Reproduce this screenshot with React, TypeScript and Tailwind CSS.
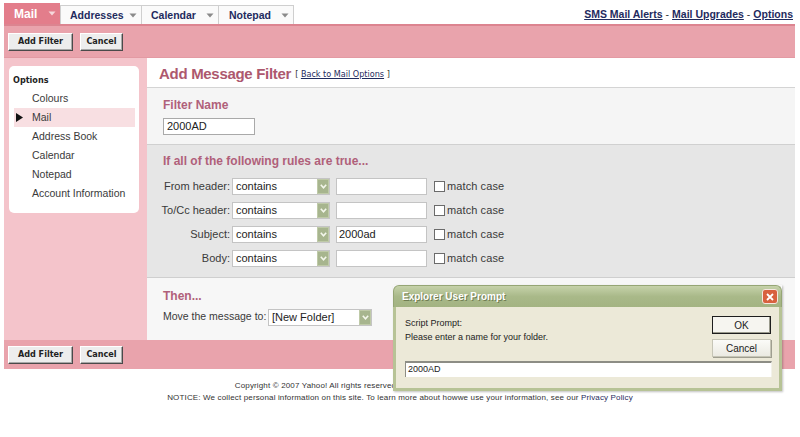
import React from 'react';

const SANS = "font-['Liberation_Sans','Arial',sans-serif]";
const COND = "font-['DejaVu_Sans_Condensed','DejaVu_Sans',sans-serif] [font-stretch:condensed]";

function TabArrow({ color }: { color: string }) {
  return (
    <svg width="8" height="5" viewBox="0 0 8 5" className="shrink-0">
      <path d="M0.5 0.5 L7.5 0.5 L4 4.5 Z" fill={color} />
    </svg>
  );
}

function Btn({ label, w }: { label: string; w: string }) {
  return (
    <div
      className={`${w} h-[18px] flex items-center justify-center bg-[#ededed] border border-t-[#ffffff] border-l-[#ffffff] border-r-[#4a4a4a] border-b-[#4a4a4a] shadow-[inset_-1px_-1px_0_#a8a8a8] text-[9px] font-bold text-[#222] ${COND}`}
    >
      {label}
    </div>
  );
}

function GreenDrop() {
  return (
    <div className="w-[12px] h-[15px] bg-[#a7b58e] border border-[#bfcaa8] flex items-center justify-center shrink-0">
      <svg width="7" height="5" viewBox="0 0 7 5">
        <path d="M0.8 0.8 L3.5 3.8 L6.2 0.8" stroke="#f4f7ec" strokeWidth="1.6" fill="none" />
      </svg>
    </div>
  );
}

function Select({ value, w }: { value: string; w: string }) {
  return (
    <div className={`${w} h-[17px] bg-white border border-[#c4c4c4] flex items-center justify-between pl-[3px] shrink-0`}>
      <span className="text-[11px] text-[#222] leading-none whitespace-nowrap">{value}</span>
      <GreenDrop />
    </div>
  );
}

function RuleRow({ label, value }: { label: string; value?: string }) {
  return (
    <div className="flex items-center h-[17px]">
      <div className="w-[85px] text-right text-[11px] text-[#3a3a3a] pr-[2px] whitespace-nowrap">{label}</div>
      <Select value="contains" w="w-[98px]" />
      <div className="w-[91px] h-[17px] ml-[6px] bg-white border border-[#c4c4c4] flex items-center pl-[2px] text-[11px] text-[#222]">
        {value ?? ''}
      </div>
      <div className="w-[11px] h-[11px] ml-[7px] bg-white border border-[#6b6b6b]" />
      <span className="ml-[2px] text-[11px] text-[#3a3a3a] tracking-[0.1px]">match case</span>
    </div>
  );
}

export default function App() {
  const sideItems = ['Colours', 'Mail', 'Address Book', 'Calendar', 'Notepad', 'Account Information'];
  return (
    <div className={`w-[800px] h-[437px] relative bg-white overflow-hidden ${SANS}`}>
      {/* Top nav */}
      <div className="h-[24px] flex items-end justify-between pl-[4px] pr-[7px]">
        <div className="flex items-end h-full">
          <div className="w-[56px] h-[21px] bg-[#e37d8b] flex items-center justify-between pl-[10px] pr-[4px]">
            <span className="text-white font-bold text-[12px] leading-none">Mail</span>
            <TabArrow color="#f6d8dc" />
          </div>
          <div className="w-[82px] h-[19px] bg-[#fafafa] border border-b-0 border-[#cfcfcf] flex items-center justify-between pl-[9px] pr-[4px]">
            <span className="text-[#1f2b5e] font-bold text-[10.5px] leading-none">Addresses</span>
            <TabArrow color="#8a8a8a" />
          </div>
          <div className="w-[77px] h-[19px] bg-[#fafafa] border border-b-0 border-l-0 border-[#cfcfcf] flex items-center justify-between pl-[9px] pr-[4px]">
            <span className="text-[#1f2b5e] font-bold text-[10.5px] leading-none">Calendar</span>
            <TabArrow color="#8a8a8a" />
          </div>
          <div className="w-[75px] h-[19px] bg-[#fafafa] border border-b-0 border-l-0 border-[#cfcfcf] flex items-center justify-between pl-[10px] pr-[4px]">
            <span className="text-[#1f2b5e] font-bold text-[10.5px] leading-none">Notepad</span>
            <TabArrow color="#8a8a8a" />
          </div>
        </div>
        <div className="h-full flex items-center pt-[5px] text-[10.5px] font-bold text-[#1f2b5e]">
          <span className="underline">SMS Mail Alerts</span>
          <span className="text-[#333] font-normal mx-[3px]">-</span>
          <span className="underline">Mail Upgrades</span>
          <span className="text-[#333] font-normal mx-[3px]">-</span>
          <span className="underline">Options</span>
        </div>
      </div>

      {/* Top toolbar */}
      <div className="ml-[4px] w-[791px] h-[34px] bg-[#e9a3ac] border-t-[2px] border-[#dc8490] border-b border-b-[#e39aa3] flex items-center gap-[7px] pl-[4px] pt-[1px]">
        <Btn label="Add Filter" w="w-[65px]" />
        <Btn label="Cancel" w="w-[43px]" />
      </div>

      {/* Main */}
      <div className="ml-[4px] w-[791px] h-[282px] flex">
        <div className="w-[143px] bg-[#f4c4cb] pt-[8px] pl-[5px]">
          <div className="w-[130px] h-[147px] bg-white rounded-[5px] pt-[8px]">
            <div className={`h-[12px] pl-[4px] text-[9px] font-bold text-[#222] leading-[12px] ${COND}`}>Options</div>
            <div className="mt-[3px]">
              {sideItems.map((it) => (
                <div
                  key={it}
                  className={`ml-[5px] w-[121px] h-[19px] flex items-center text-[10.5px] text-[#3a3a3a] ${it === 'Mail' ? 'bg-[#f8dfe2]' : ''}`}
                >
                  <div className="w-[18px] flex items-center pl-[2px]">
                    {it === 'Mail' && (
                      <svg width="7" height="9" viewBox="0 0 7 9">
                        <path d="M0 0 L7 4.5 L0 9 Z" fill="#111" />
                      </svg>
                    )}
                  </div>
                  <span>{it}</span>
                </div>
              ))}
            </div>
          </div>
        </div>

        <div className="flex-1 flex flex-col">
          <div className="h-[30px] bg-white border-b border-[#d4d4d4] flex items-center pl-[12px] pt-[3px]">
            <span className="text-[15px] font-bold text-[#ad586e] tracking-[-0.3px]">Add Message Filter</span>
            <span className={`ml-[4px] mt-[2px] text-[9px] text-[#333] ${COND}`}>
              [ <span className="underline text-[#1f2b5e]">Back to Mail Options</span> ]
            </span>
          </div>

          <div className="h-[57px] bg-[#f5f5f5] border-b border-[#d0d0d0] pl-[16px] pt-[10px]">
            <div className="h-[14px] leading-[14px] text-[12px] font-bold text-[#b0607a]">Filter Name</div>
            <div className="mt-[6px] w-[92px] h-[17px] bg-white border border-[#a9a9a9] flex items-center pl-[3px] text-[11px] text-[#222]">
              2000AD
            </div>
          </div>

          <div className="h-[133px] bg-[#e6e6e6] border-b border-[#cfcfcf] pt-[9px]">
            <div className="pl-[16px] h-[14px] leading-[14px] text-[12px] font-bold text-[#b0607a]">
              If all of the following rules are true...
            </div>
            <div className="mt-[10px] flex flex-col gap-[7px]">
              <RuleRow label="From header:" />
              <RuleRow label="To/Cc header:" />
              <RuleRow label="Subject:" value="2000ad" />
              <RuleRow label="Body:" />
            </div>
          </div>

          <div className="flex-1 bg-[#f7f7f7] pl-[16px] pt-[11px]">
            <div className="h-[14px] leading-[14px] text-[12px] font-bold text-[#b0607a]">Then...</div>
            <div className="mt-[5px] flex items-center h-[18px]">
              <span className="text-[10.5px] text-[#3a3a3a] w-[105px] shrink-0 whitespace-nowrap">Move the message to:</span>
              <Select value="[New Folder]" w="w-[104px]" />
            </div>
          </div>
        </div>
      </div>

      {/* Bottom toolbar */}
      <div className="ml-[4px] w-[791px] h-[29px] bg-[#e9a3ac] flex items-center gap-[7px] pl-[4px]">
        <Btn label="Add Filter" w="w-[65px]" />
        <Btn label="Cancel" w="w-[43px]" />
      </div>

      {/* Footer */}
      <div className="pt-[11px] text-center text-[8px] leading-[12px] text-[#333] tracking-[0.15px]">
        <div>Copyright © 2007 Yahoo! All rights reserved. Copyright/IP Policy - Terms of Service - Help</div>
        <div>
          NOTICE: We collect personal information on this site. To learn more about howwe use your information, see our{' '}
          <span className="text-[#1f2b5e]">Privacy Policy</span>
        </div>
      </div>

      {/* Dialog */}
      <div className="absolute left-[393px] top-[285px] w-[389px] h-[106px] flex flex-col shadow-[1px_1px_2px_rgba(0,0,0,0.25)]">
        <div className="relative h-[22px] rounded-t-[6px] bg-linear-to-b from-[#c6d2aa] via-[#a9b989] to-[#a3b382] border border-b-0 border-[#96a675] flex items-center pl-[8px]">
          <span className={`text-[10px] font-bold text-white [text-shadow:1px_1px_0_#6f7d52] ${SANS}`}>
            Explorer User Prompt
          </span>
          <div className="absolute right-[3px] top-[3px] w-[16px] h-[15px] rounded-[3px] bg-[#d8613f] border border-[#f4e8e0] flex items-center justify-center">
            <svg width="8" height="8" viewBox="0 0 8 8">
              <path d="M1 1 L7 7 M7 1 L1 7" stroke="white" strokeWidth="1.8" />
            </svg>
          </div>
        </div>
        <div className="flex-1 bg-[#ece9d8] border-[3px] border-t-0 border-[#b7c396] flex flex-col pl-[9px] pr-[7px]">
          <div className="flex justify-between">
            <div className="pt-[10px] text-[9px] text-[#222]">
              <div className="h-[12px] leading-[12px]">Script Prompt:</div>
              <div className="mt-[2px] h-[12px] leading-[12px]">Please enter a name for your folder.</div>
            </div>
            <div className="pt-[9px] flex flex-col gap-[5px] pr-[1px]">
              <div className="w-[59px] h-[18px] bg-[#f6f5f0] border border-[#1e1e1e] shadow-[inset_-1px_-1px_0_#9a9a8c] flex items-center justify-center text-[10px] text-[#222]">
                OK
              </div>
              <div className="w-[59px] h-[18px] bg-linear-to-b from-[#fbfbf8] to-[#ebeae2] border border-[#c6c5b6] shadow-[1px_1px_0_#9f9e90] flex items-center justify-center text-[10px] text-[#222]">
                Cancel
              </div>
            </div>
          </div>
          <div className="mt-[4px] h-[16px] bg-white border-t-[2px] border-l border-[#8d8d85] border-r border-r-[#f3f2ea] flex items-center pl-[2px] text-[9px] text-[#222]">
            2000AD
          </div>
        </div>
      </div>
    </div>
  );
}
